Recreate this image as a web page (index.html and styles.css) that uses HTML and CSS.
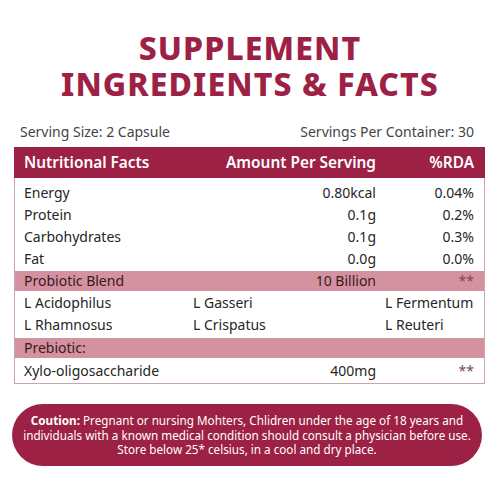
FILE: index.html
```html
<!DOCTYPE html>
<html lang="en">
<head>
  <meta charset="UTF-8" />
  <meta name="viewport" content="width=device-width, initial-scale=1.0"/>
  <title>Supplement Facts</title>
  <link rel="stylesheet" href="styles.css">
</head>
<body>
  <div class="page">
    <h1 class="title">SUPPLEMENT<br>INGREDIENTS &amp; FACTS</h1>

    <div class="serving">
      <span>Serving Size: 2 Capsule</span>
      <span>Servings Per Container: 30</span>
    </div>

    <div class="facts">
      <div class="row head">
        <span>Nutritional Facts</span>
        <span class="num">Amount Per Serving</span>
        <span class="num">%RDA</span>
      </div>

      <div class="row first">
        <span>Energy</span>
        <span class="num">0.80kcal</span>
        <span class="num">0.04%</span>
      </div>
      <div class="row">
        <span>Protein</span>
        <span class="num">0.1g</span>
        <span class="num">0.2%</span>
      </div>
      <div class="row">
        <span>Carbohydrates</span>
        <span class="num">0.1g</span>
        <span class="num">0.3%</span>
      </div>
      <div class="row">
        <span>Fat</span>
        <span class="num">0.0g</span>
        <span class="num">0.0%</span>
      </div>

      <div class="row band">
        <span>Probiotic Blend</span>
        <span class="num">10 Billion</span>
        <span class="num stars">**</span>
      </div>

      <div class="strains">
        <span>L Acidophilus</span>
        <span>L Gasseri</span>
        <span>L Fermentum</span>
        <span>L Rhamnosus</span>
        <span>L Crispatus</span>
        <span>L Reuteri</span>
      </div>

      <div class="row band">
        <span>Prebiotic:</span>
      </div>
      <div class="row last">
        <span>Xylo-oligosaccharide</span>
        <span class="num">400mg</span>
        <span class="num stars">**</span>
      </div>
    </div>

    <p class="caution">
      <strong>Coution:</strong> Pregnant or nursing Mohters, Chlidren under the age of 18 years and<br>
      individuals with a known medical condition should consult a physician before use.<br>
      Store below 25* celsius, in a cool and dry place.
    </p>
  </div>
</body>
</html>
```

FILE: styles.css
```css
body {
  margin: 0;
  background: #ffffff;
  font-family: "Noto Sans", Arial, sans-serif;
  color: #262626;
}

.page {
  width: 500px;
  height: 500px;
  padding-top: 30px;
  box-sizing: border-box;
}

.title {
  margin: 0;
  text-align: center;
  font-size: 32px;
  line-height: 36px;
  font-weight: 800;
  color: #9c2145;
  letter-spacing: 1.1px;
}

.serving {
  display: flex;
  justify-content: space-between;
  margin: 19px 26px 0 20px;
  font-size: 14px;
  color: #444444;
  height: 22px;
  line-height: 22px;
}

.facts {
  margin: 4px 15px 0 14px;
  border: 1px solid #c8a6ae;
  border-top: none;
}

.row {
  display: grid;
  grid-template-columns: 1fr 180px 98px;
  padding: 0 10px 0 9px;
  height: 22px;
  line-height: 22px;
  font-size: 14px;
}

.row .num {
  text-align: right;
}

.head {
  height: 31px;
  line-height: 31px;
  margin: 0 -1px;
  padding: 0 11px 0 10px;
  background: #9c2145;
  color: #ffffff;
  font-size: 15.4px;
  font-weight: 600;
}

.first {
  margin-top: 4px;
}

.band {
  height: 20px;
  line-height: 20px;
  background: #d4919f;
  color: #3a1a22;
  margin-top: 1px;
}

.stars {
  color: #7a4a55;
}

.strains {
  display: grid;
  grid-template-columns: 169px 192px 1fr;
  padding: 1px 10px 1px 9px;
  font-size: 14px;
}

.strains span {
  height: 22px;
  line-height: 22px;
}

.last {
  height: 25px;
  line-height: 25px;
}

.caution {
  margin: 20px 18px 0 12px;
  padding: 9px 10px;
  border-radius: 32px;
  background: #9c2145;
  color: #ffffff;
  text-align: center;
  font-size: 11.7px;
  line-height: 14.5px;
}
```
